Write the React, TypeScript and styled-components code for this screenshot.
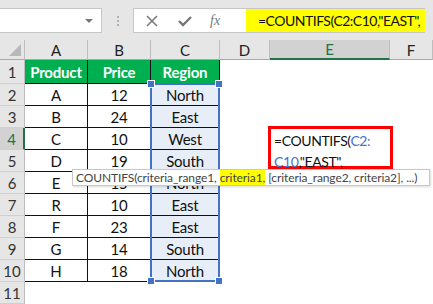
import React from 'react';
import styled, { createGlobalStyle } from 'styled-components';

const GlobalStyle = createGlobalStyle`
  html, body {
    margin: 0;
    padding: 0;
    background: #ffffff;
    overflow: hidden;
  }
  body {
    font-family: Lato, "Liberation Sans", sans-serif;
  }
`;

const Page = styled.div`
  width: 433px;
  height: 304px;
  display: flex;
  flex-direction: column;
  background: #e6e6e6;
  overflow: hidden;
`;

const FormulaBar = styled.div`
  height: 43px;
  display: flex;
  align-items: flex-start;
  padding-top: 8px;
  box-sizing: border-box;
  background: #e6e6e6;
`;

const NameBox = styled.div`
  width: 102px;
  height: 25px;
  box-sizing: border-box;
  background: #ffffff;
  border: 1px solid #c6c6c6;
  border-left: none;
  display: flex;
  align-items: center;
  justify-content: flex-end;
  padding-right: 8px;
`;

const Caret = styled.div`
  width: 0;
  height: 0;
  border-left: 4px solid transparent;
  border-right: 4px solid transparent;
  border-top: 4px solid #777;
`;

const Grip = styled.div`
  width: 31px;
  height: 25px;
  display: flex;
  flex-direction: column;
  align-items: center;
  justify-content: center;
  gap: 2px;
`;

const Dot = styled.span`
  width: 2px;
  height: 2px;
  background: #b0b0b0;
`;

const ButtonBox = styled.div`
  width: 113px;
  height: 25px;
  box-sizing: border-box;
  background: #ffffff;
  border: 1px solid #c6c6c6;
  border-right: none;
  display: flex;
  align-items: center;
  padding-left: 12px;
  gap: 20px;
`;

const Fx = styled.span`
  font-family: "Liberation Serif", serif;
  font-style: italic;
  font-size: 14px;
  color: #777;
  margin-left: -2px;
`;

const FormulaInput = styled.div`
  width: 179px;
  height: 25px;
  box-sizing: border-box;
  background: #ffff00;
  border-top: 1px solid #c6c6c6;
  border-bottom: 1px solid #c6c6c6;
  display: flex;
  align-items: center;
  padding-left: 12px;
  font-size: 14px;
  letter-spacing: -0.5px;
  color: #111;
  white-space: nowrap;
  overflow: hidden;
`;

const Sheet = styled.div`
  position: relative;
  flex: 1;
  display: grid;
  grid-template-columns: 25px 63px 63px 69px 50px 120px 1fr;
  grid-template-rows: 20px 24px repeat(10, 22px);
  background: #ffffff;
`;

const Corner = styled.div`
  position: relative;
  background: #e6e6e6;
  border-right: 1px solid #bdbdbd;
  border-bottom: 1px solid #a8a8a8;
  &::after {
    content: '';
    position: absolute;
    right: 3px;
    bottom: 3px;
    width: 0;
    height: 0;
    border-left: 12px solid transparent;
    border-bottom: 12px solid #b8b8b8;
  }
`;

const ColHead = styled.div<{ $active?: boolean }>`
  display: flex;
  align-items: center;
  justify-content: center;
  box-sizing: border-box;
  font-size: 15px;
  color: ${p => (p.$active ? '#217346' : '#222')};
  background: ${p => (p.$active ? '#d2d2d2' : '#e6e6e6')};
  border-right: 1px solid #bdbdbd;
  border-bottom: ${p => (p.$active ? '2px solid #217346' : '1px solid #a8a8a8')};
`;

const RowHead = styled.div<{ $active?: boolean }>`
  display: flex;
  align-items: center;
  justify-content: center;
  box-sizing: border-box;
  font-size: 15px;
  color: ${p => (p.$active ? '#217346' : '#333')};
  background: ${p => (p.$active ? '#d2d2d2' : '#e6e6e6')};
  border-bottom: 1px solid #d0d0d0;
  border-right: ${p => (p.$active ? '2px solid #217346' : '1px solid #bdbdbd')};
`;

const Cell = styled.div<{ $head?: boolean; $sel?: boolean; $empty?: boolean }>`
  display: flex;
  align-items: center;
  justify-content: center;
  box-sizing: border-box;
  font-size: 15px;
  letter-spacing: -0.2px;
  font-weight: ${p => (p.$head ? 700 : 400)};
  color: ${p => (p.$head ? '#ffffff' : '#111')};
  background: ${p => (p.$head ? '#00b050' : p.$sel ? '#e8eef8' : '#ffffff')};
  border-bottom: ${p => (p.$empty ? 'none' : '1px solid #111')};
  border-right: ${p => (p.$empty ? 'none' : '1px solid #111')};
  white-space: nowrap;
`;

const Selection = styled.div`
  position: absolute;
  left: 150px;
  top: 43px;
  width: 70px;
  height: 199px;
  box-sizing: border-box;
  border: 2px solid #4472c4;
  pointer-events: none;
`;

const Handle = styled.span<{ $x: 'l' | 'r'; $y: 't' | 'b' }>`
  position: absolute;
  width: 6px;
  height: 6px;
  background: #4472c4;
  border: 1px solid #ffffff;
  ${p => (p.$x === 'l' ? 'left: -5px;' : 'right: -5px;')}
  ${p => (p.$y === 't' ? 'top: -5px;' : 'bottom: -5px;')}
`;

const EditBox = styled.div`
  position: absolute;
  left: 268px;
  top: 86px;
  width: 125px;
  height: 43px;
  box-sizing: border-box;
  border: 3px solid #ff0000;
  background: #ffffff;
  padding: 1px 0 0 3px;
  font-size: 14px;
  letter-spacing: -0.4px;
  line-height: 21px;
  color: #111;
  white-space: nowrap;
`;

const Ref = styled.span`
  color: #4472c4;
`;

const Tooltip = styled.div`
  position: absolute;
  left: 72px;
  top: 129px;
  width: 358px;
  height: 17px;
  box-sizing: border-box;
  padding: 0 3px;
  background: #ffffff;
  border: 1px solid #c8c8c8;
  box-shadow: 1px 1px 2px rgba(0, 0, 0, 0.15);
  display: flex;
  align-items: center;
  font-size: 12px;
  letter-spacing: -0.1px;
  color: #444;
  white-space: pre;
`;

const Mark = styled.span`
  background: #ffff00;
`;

const rows: [string, string, string][] = [
  ['A', '12', 'North'],
  ['B', '24', 'East'],
  ['C', '10', 'West'],
  ['D', '19', 'South'],
  ['E', '15', 'North'],
  ['R', '10', 'East'],
  ['F', '23', 'East'],
  ['G', '14', 'South'],
  ['H', '18', 'North'],
];

const CloseIcon = () => (
  <svg width="12" height="12" viewBox="0 0 12 12">
    <path d="M1 1 L11 11 M11 1 L1 11" stroke="#777" strokeWidth="1.5" fill="none" />
  </svg>
);

const CheckIcon = () => (
  <svg width="14" height="12" viewBox="0 0 14 12">
    <path d="M1 6 L5 10 L13 2" stroke="#777" strokeWidth="2.4" fill="none" />
  </svg>
);

const App: React.FC = () => {
  const letters = ['A', 'B', 'C', 'D', 'E', 'F'];
  return (
    <Page>
      <GlobalStyle />
      <FormulaBar>
        <NameBox>
          <Caret />
        </NameBox>
        <Grip>
          <Dot />
          <Dot />
          <Dot />
        </Grip>
        <ButtonBox>
          <CloseIcon />
          <CheckIcon />
          <Fx>fx</Fx>
        </ButtonBox>
        <FormulaInput>=COUNTIFS(C2:C10,"EAST",</FormulaInput>
      </FormulaBar>
      <Sheet>
        <Corner />
        {letters.map(l => (
          <ColHead key={l} $active={l === 'E'}>
            {l}
          </ColHead>
        ))}

        <RowHead>1</RowHead>
        <Cell $head>Product</Cell>
        <Cell $head>Price</Cell>
        <Cell $head>Region</Cell>
        <Cell $empty />
        <Cell $empty />
        <Cell $empty />

        {rows.map((r, i) => (
          <React.Fragment key={i}>
            <RowHead $active={i + 2 === 4}>{i + 2}</RowHead>
            <Cell>{r[0]}</Cell>
            <Cell>{r[1]}</Cell>
            <Cell $sel>{r[2]}</Cell>
            <Cell $empty />
            <Cell $empty />
            <Cell $empty />
          </React.Fragment>
        ))}

        <RowHead>11</RowHead>

        <Selection>
          <Handle $x="l" $y="t" />
          <Handle $x="r" $y="t" />
          <Handle $x="l" $y="b" />
          <Handle $x="r" $y="b" />
        </Selection>

        <EditBox>
          =COUNTIFS(<Ref>C2:</Ref>
          <br />
          <Ref>C10</Ref>,"EAST",
        </EditBox>

        <Tooltip>
          COUNTIFS(criteria_range1, <Mark>criteria1,</Mark> [criteria_range2, criteria2], ...)
        </Tooltip>
      </Sheet>
    </Page>
  );
};

export default App;
